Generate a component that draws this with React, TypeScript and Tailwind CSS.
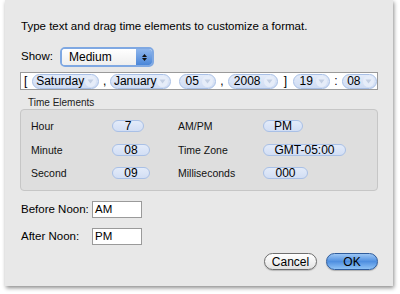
import React from "react";

const tokens = [
  { pre: "[", label: "Saturday", w: "w-[68px]" },
  { pre: ",", label: "January", w: "w-[62px]" },
  { pre: "", label: "05", w: "w-[38px]" },
  { pre: ",", label: "2008", w: "w-[51px]" },
  { pre: "]", label: "19", w: "w-[38px]" },
  { pre: ":", label: "08", w: "w-[36px]" },
];

const rows = [
  { l: "Hour", v: "7", vw: "w-[32px]", r: "AM/PM", rv: "PM", rw: "w-[40px]" },
  { l: "Minute", v: "08", vw: "w-[38px]", r: "Time Zone", rv: "GMT-05:00", rw: "w-[83px]" },
  { l: "Second", v: "09", vw: "w-[38px]", r: "Milliseconds", rv: "000", rw: "w-[45px]" },
];

function Chevron() {
  return (
    <span className="ml-auto mr-[2px] flex h-[11px] w-[11px] items-center justify-center rounded-full bg-[#e6edf9]">
      <svg width="7" height="5" viewBox="0 0 7 5">
        <path d="M0.5 0.5 L3.5 4.5 L6.5 0.5 Z" fill="#c3cfe3" />
      </svg>
    </span>
  );
}

function Token({ label, w }: { label: string; w: string }) {
  return (
    <span
      className={`${w} flex h-[15px] items-center rounded-full border border-[#a9c0e6] bg-gradient-to-b from-[#e3ebf9] to-[#cfdcf3] pl-[2px]`}
    >
      <span className="flex-1 text-center leading-[13px]">{label}</span>
      <Chevron />
    </span>
  );
}

function Pill({ v, w }: { v: string; w: string }) {
  return (
    <span
      className={`${w} flex h-[12px] items-center justify-center rounded-full border border-[#a9c0e6] bg-gradient-to-b from-[#e3ebf9] to-[#d2def4] text-[12px] leading-[12px] text-black`}
    >
      {v}
    </span>
  );
}

export default function App() {
  return (
    <div className="h-[294px] w-[400px] overflow-hidden bg-white font-['Liberation_Sans',Arial,sans-serif] text-[11.5px] text-black">
      <div className="ml-[5px] flex h-[286px] w-[388px] flex-col bg-[#e8e8e8] px-[15px] shadow-[1px_2px_4px_rgba(0,0,0,0.45)]">
        <p className="mt-[19px] pl-[1px] leading-[14px]">
          Type text and drag time elements to customize a format.
        </p>

        {/* show popup */}
        <div className="mt-[14px] flex h-[20px] items-center pl-[1px]">
          <span className="w-[39px]">Show:</span>
          <div className="flex h-[20px] w-[94px] rounded-[5px] border-2 border-[#7fa8e2] bg-white">
            <div className="flex flex-1 items-center rounded-l-[3px] bg-gradient-to-b from-white to-[#eeeeee] pl-[7px] text-[12px]">
              Medium
            </div>
            <div className="flex w-[16px] flex-col items-center justify-center gap-[1px] rounded-r-[3px] bg-gradient-to-b from-[#8fb6ec] to-[#4a86d8]">
              <svg width="5" height="3" viewBox="0 0 5 3">
                <path d="M0 3 L2.5 0 L5 3 Z" fill="#111" />
              </svg>
              <svg width="5" height="3" viewBox="0 0 5 3">
                <path d="M0 0 L2.5 3 L5 0 Z" fill="#111" />
              </svg>
            </div>
          </div>
        </div>

        {/* format field */}
        <div className="mt-[5px] flex h-[18px] items-center border border-[#9a9a9a] bg-white pl-[3px] text-[12px]">
          {tokens.map((t, i) => (
            <React.Fragment key={i}>
              {t.pre && (
                <span className={`${i === 0 ? "mr-[5px]" : i === 4 ? "mx-[6px]" : "mx-[4px]"} leading-[14px]`}>
                  {t.pre}
                </span>
              )}
              {!t.pre && <span className="w-[8px]" />}
              <Token label={t.label} w={t.w} />
            </React.Fragment>
          ))}
        </div>

        {/* time elements */}
        <div className="mt-[7px] pl-[8px] text-[10px] leading-[11px] text-[#222]">Time Elements</div>
        <div className="mt-[1px] h-[82px] rounded-[4px] border border-[#c6c6c6] bg-[#dedede] pl-[10px] pt-[9px]">
          <div className="grid grid-cols-[81px_66px_85px_auto] gap-y-[9.5px] text-[10.5px] leading-[14px] text-[#111]">
            {rows.map((r) => (
              <React.Fragment key={r.l}>
                <span>{r.l}</span>
                <span className="flex items-center">
                  <Pill v={r.v} w={r.vw} />
                </span>
                <span>{r.r}</span>
                <span className="flex items-center">
                  <Pill v={r.rv} w={r.rw} />
                </span>
              </React.Fragment>
            ))}
          </div>
        </div>

        {/* noon fields */}
        <div className="mt-[10px] flex flex-col gap-[10px] pl-[1px]">
          <div className="flex h-[17px] items-center">
            <span className="w-[71px]">Before Noon:</span>
            <span className="flex h-[17px] w-[50px] items-center border border-[#9a9a9a] bg-white pl-[2px]">AM</span>
          </div>
          <div className="flex h-[17px] items-center">
            <span className="w-[71px]">After Noon:</span>
            <span className="flex h-[17px] w-[50px] items-center border border-[#9a9a9a] bg-white pl-[2px]">PM</span>
          </div>
        </div>

        {/* buttons */}
        <div className="mt-[8px] flex justify-end gap-[9px]">
          <button className="flex h-[17px] w-[53px] items-center justify-center rounded-full border border-[#6e6e6e] bg-gradient-to-b from-white via-[#f2f2f2] to-[#e2e2e2] text-[12px] leading-[14px] shadow-[0_1px_1px_rgba(0,0,0,0.2)]">
            Cancel
          </button>
          <button className="flex h-[17px] w-[52px] items-center justify-center rounded-full border border-[#2f5c9c] bg-gradient-to-b from-[#9cc6f4] via-[#4f8fe0] to-[#8ec2f6] text-[12px] leading-[14px] shadow-[0_1px_1px_rgba(0,0,0,0.25)]">
            OK
          </button>
        </div>
      </div>
    </div>
  );
}
